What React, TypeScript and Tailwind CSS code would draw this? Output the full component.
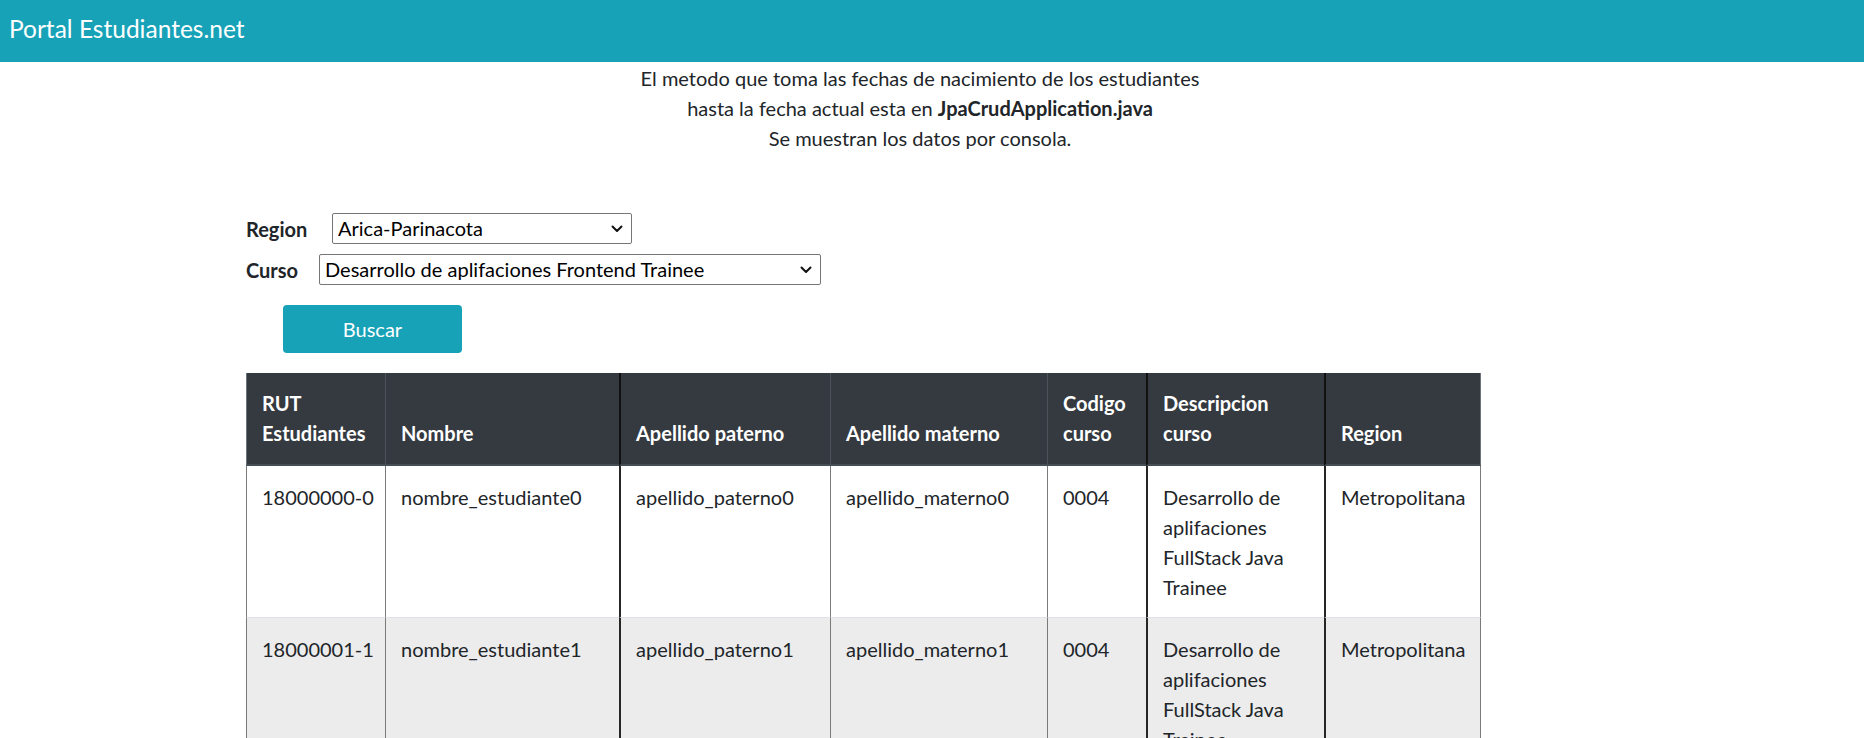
import React from "react";

const font = { fontFamily: "Lato, 'Open Sans', sans-serif" };

const columns = [
  { label: ["RUT", "Estudiantes"], w: "w-[139px]", head: "border-l border-l-[#6c757d]", body: "border-l border-l-[#7a7a7a] whitespace-nowrap pr-0" },
  { label: ["Nombre"], w: "w-[234px]", head: "border-l border-l-[#4b535b]", body: "border-l border-l-[#7a7a7a]" },
  { label: ["Apellido paterno"], w: "w-[211px]", head: "border-l-2 border-l-[#111111]", body: "border-l-2 border-l-[#262626]" },
  { label: ["Apellido materno"], w: "w-[217px]", head: "border-l border-l-[#4b535b]", body: "border-l border-l-[#7a7a7a]" },
  { label: ["Codigo", "curso"], w: "w-[99px]", head: "border-l border-l-[#4b535b]", body: "border-l border-l-[#7a7a7a]" },
  { label: ["Descripcion", "curso"], w: "w-[178px]", head: "border-l-2 border-l-[#111111]", body: "border-l-2 border-l-[#262626]" },
  { label: ["Region"], w: "w-[157px]", head: "border-l-2 border-l-[#111111] border-r border-r-[#6c757d]", body: "border-l-2 border-l-[#262626] border-r border-r-[#7a7a7a]" },
];

const estudiantes = [0, 1].map((i) => ({
  rut: `1800000${i}-${i}`,
  nombre: `nombre_estudiante${i}`,
  paterno: `apellido_paterno${i}`,
  materno: `apellido_materno${i}`,
  codigo: "0004",
  descripcion: "Desarrollo de aplifaciones FullStack Java Trainee",
  region: "Metropolitana",
}));

function Chevron() {
  return (
    <svg width="12" height="8" viewBox="0 0 12 8" className="pointer-events-none absolute right-[9px] top-1/2 -translate-y-1/2">
      <path d="M1.5 1.5 6 6l4.5-4.5" fill="none" stroke="#111" strokeWidth="2" strokeLinecap="round" strokeLinejoin="round" />
    </svg>
  );
}

function Select({ value, width }: { value: string; width: string }) {
  return (
    <div className={`relative ${width}`}>
      <select
        defaultValue={value}
        style={font}
        className="h-[31px] w-full appearance-none rounded-[2px] border border-[#767676] bg-white pl-[5px] text-[20px] leading-[29px] text-black outline-none"
      >
        <option>{value}</option>
      </select>
      <Chevron />
    </div>
  );
}

export default function App() {
  return (
    <div className="h-screen overflow-hidden bg-white text-[20px] leading-[30px] text-[#212529]" style={font}>
      {/* navbar */}
      <div className="flex h-[62px] items-center bg-[#17a2b8] px-[9px] pb-[4px]">
        <span className="text-[24.5px] text-white">Portal Estudiantes.net</span>
      </div>

      <div className="mt-[1px] w-[1840px] text-center">
        <p>El metodo que toma las fechas de nacimiento de los estudiantes</p>
        <p>
          hasta la fecha actual esta en <b>JpaCrudApplication.java</b>
        </p>
        <p>Se muestran los datos por consola.</p>
      </div>

      <div className="ml-[246px] mt-[60px]">
        <div className="flex flex-col gap-[10px]">
          <div className="flex items-center">
            <label className="w-[86px] font-bold">Region</label>
            <Select value="Arica-Parinacota" width="w-[300px]" />
          </div>
          <div className="flex items-center">
            <label className="w-[73px] font-bold">Curso</label>
            <Select value="Desarrollo de aplifaciones Frontend Trainee" width="w-[502px]" />
          </div>
        </div>

        <button className="ml-[37px] mt-[20px] h-[48px] w-[179px] rounded-[4px] bg-[#17a2b8] text-[20px] text-white" style={font}>
          Buscar
        </button>

        <table className="mt-[20px] w-[1235px] table-fixed border-separate border-spacing-0">
          <thead>
            <tr>
              {columns.map((c, i) => (
                <th
                  key={i}
                  className={`${c.w} ${c.head} border-b-2 border-b-[#454d55] bg-[#343a40] px-[15px] pt-[15px] pb-[16px] text-left align-bottom font-bold text-white`}
                >
                  {c.label.map((l) => (
                    <div key={l}>{l}</div>
                  ))}
                </th>
              ))}
            </tr>
          </thead>
          <tbody>
            {estudiantes.map((e, r) => {
              const cells = [e.rut, e.nombre, e.paterno, e.materno, e.codigo, e.descripcion, e.region];
              return (
                <tr key={r} className={r % 2 === 1 ? "bg-[#ececec]" : "bg-white"}>
                  {cells.map((v, i) => (
                    <td
                      key={i}
                      className={`${columns[i].body} ${r > 0 ? "border-t border-t-[#dee2e6]" : ""} pl-[15px] pr-[15px] pt-[16px] pb-[15px] align-top`}
                    >
                      {v}
                    </td>
                  ))}
                </tr>
              );
            })}
          </tbody>
        </table>
      </div>
    </div>
  );
}
